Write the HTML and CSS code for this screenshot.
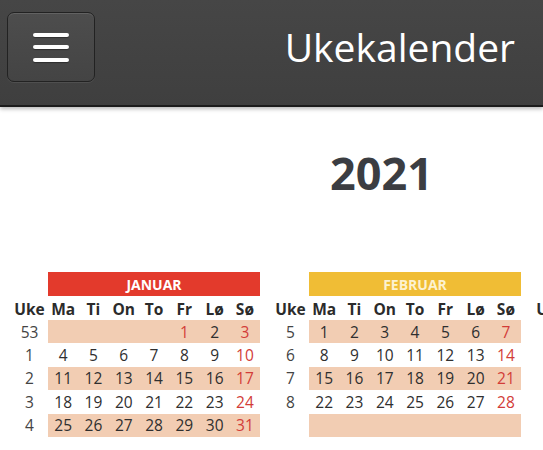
FILE: index.html
```html
<!DOCTYPE html>
<html lang="no">
<head>
<meta charset="utf-8">
<title>Ukekalender</title>
<link rel="stylesheet" href="styles.css">
</head>
<body>
<header class="topbar">
  <button class="menu-btn" aria-label="Meny">
    <span class="bar"></span><span class="bar"></span><span class="bar"></span>
  </button>
  <h1 class="title">Ukekalender</h1>
</header>
<main class="content">
  <div class="year-row"><h2 class="year">2021</h2></div>
  <div class="months">
    <section class="month">
      <div class="mname jan">JANUAR</div>
      <div class="grid">
        <div class="hd">Uke</div><div class="hd">Ma</div><div class="hd">Ti</div><div class="hd">On</div><div class="hd">To</div><div class="hd">Fr</div><div class="hd">Lø</div><div class="hd">Sø</div>
        <div class="wk">53</div><div class="d s"></div><div class="d s"></div><div class="d s"></div><div class="d s"></div><div class="d s r">1</div><div class="d s">2</div><div class="d s r">3</div>
        <div class="wk">1</div><div class="d">4</div><div class="d">5</div><div class="d">6</div><div class="d">7</div><div class="d">8</div><div class="d">9</div><div class="d r">10</div>
        <div class="wk">2</div><div class="d s">11</div><div class="d s">12</div><div class="d s">13</div><div class="d s">14</div><div class="d s">15</div><div class="d s">16</div><div class="d s r">17</div>
        <div class="wk">3</div><div class="d">18</div><div class="d">19</div><div class="d">20</div><div class="d">21</div><div class="d">22</div><div class="d">23</div><div class="d r">24</div>
        <div class="wk">4</div><div class="d s">25</div><div class="d s">26</div><div class="d s">27</div><div class="d s">28</div><div class="d s">29</div><div class="d s">30</div><div class="d s r">31</div>
      </div>
    </section>
    <section class="month">
      <div class="mname feb">FEBRUAR</div>
      <div class="grid">
        <div class="hd">Uke</div><div class="hd">Ma</div><div class="hd">Ti</div><div class="hd">On</div><div class="hd">To</div><div class="hd">Fr</div><div class="hd">Lø</div><div class="hd">Sø</div>
        <div class="wk">5</div><div class="d s">1</div><div class="d s">2</div><div class="d s">3</div><div class="d s">4</div><div class="d s">5</div><div class="d s">6</div><div class="d s r">7</div>
        <div class="wk">6</div><div class="d">8</div><div class="d">9</div><div class="d">10</div><div class="d">11</div><div class="d">12</div><div class="d">13</div><div class="d r">14</div>
        <div class="wk">7</div><div class="d s">15</div><div class="d s">16</div><div class="d s">17</div><div class="d s">18</div><div class="d s">19</div><div class="d s">20</div><div class="d s r">21</div>
        <div class="wk">8</div><div class="d">22</div><div class="d">23</div><div class="d">24</div><div class="d">25</div><div class="d">26</div><div class="d">27</div><div class="d r">28</div>
        <div class="wk"></div><div class="d s"></div><div class="d s"></div><div class="d s"></div><div class="d s"></div><div class="d s"></div><div class="d s"></div><div class="d s"></div>
      </div>
    </section>
    <section class="month partial">
      <div class="mname blank"></div>
      <div class="grid">
        <div class="hd">Uke</div>
        <div class="wk">9</div>
        <div class="wk">10</div>
        <div class="wk">11</div>
        <div class="wk">12</div>
        <div class="wk">13</div>
      </div>
    </section>
  </div>
</main>
</body>
</html>
```
FILE: styles.css
```css
html, body {
  margin: 0;
  padding: 0;
  background: #ffffff;
  overflow: hidden;
}
body {
  font-family: "Open Sans", "Noto Sans", sans-serif;
  width: 543px;
  height: 450px;
}
.topbar {
  height: 105px;
  background: linear-gradient(#464646, #3f3f3f);
  border-bottom: 2px solid #1c1c1c;
  box-shadow: 0 2px 4px rgba(0,0,0,0.28);
  display: flex;
  align-items: flex-start;
  justify-content: space-between;
  padding: 0 28px 0 7px;
}
.menu-btn {
  width: 88px;
  height: 70px;
  margin-top: 12px;
  border-radius: 7px;
  border: 1px solid #222;
  background: linear-gradient(#4d4d4d, #444);
  box-shadow: inset 0 1px 0 rgba(255,255,255,0.12), 0 1px 0 rgba(255,255,255,0.08);
  display: flex;
  flex-direction: column;
  align-items: center;
  justify-content: center;
  gap: 8.5px;
  padding: 0;
}
.menu-btn .bar {
  display: block;
  width: 36px;
  height: 4px;
  border-radius: 2px;
  background: #ffffff;
  box-shadow: 0 1px 1px rgba(0,0,0,0.35);
}
.title {
  margin: 20px 0 0 0;
  font-weight: 400;
  font-size: 39px;
  line-height: 54px;
  color: #ffffff;
}
.content {
  padding-top: 38px;
}
.year-row {
  display: flex;
  justify-content: center;
  padding-left: 220px;
}
.year {
  margin: 0;
  font-size: 45px;
  font-weight: 700;
  line-height: 56px;
  color: #3b3d42;
}
.months {
  display: flex;
  gap: 12px;
  padding-left: 11px;
  margin-top: 71px;
  width: 543px;
  box-sizing: border-box;
  overflow: hidden;
}
.month {
  width: 249px;
  flex: none;
}
.month.partial {
  width: 37px;
}
.mname {
  margin-left: 37px;
  height: 24px;
  line-height: 25px;
  text-align: center;
  font-size: 14px;
  font-weight: 700;
  color: #fff;
}
.mname.blank {
  background: transparent;
}
.jan { background: #e33a2c; }
.feb { background: #f0bd35; color: #fdf2d0; }
.grid {
  display: grid;
  grid-template-columns: 37px repeat(7, 30.3px);
  grid-template-rows: 23px repeat(5, 23.4px);
  margin-top: 1px;
  font-size: 15.5px;
}
.partial .grid {
  grid-template-columns: 37px;
}
.grid > div {
  display: flex;
  align-items: center;
  justify-content: center;
}
.hd {
  font-weight: 700;
  color: #2b2b2b;
}
.wk {
  color: #444;
}
.d {
  color: #2f2f2f;
}
.d.s {
  background: #f2cdb3;
}
.d.r {
  color: #d23c38;
}
```
